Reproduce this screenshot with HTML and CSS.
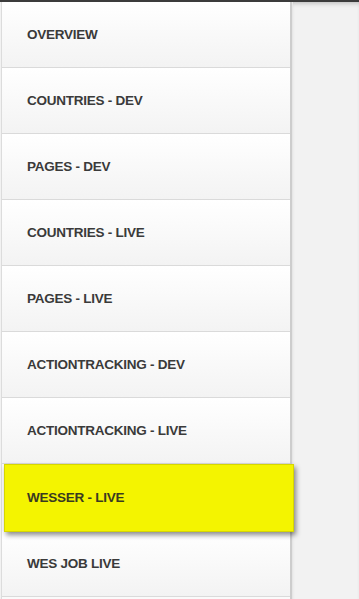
FILE: index.html
```html
<!DOCTYPE html>
<html lang="en">
<head>
    <meta charset="UTF-8">
    <meta name="viewport" content="width=device-width, initial-scale=1.0">
    <title>Reports</title>
    <link rel="stylesheet" href="styles.css">
</head>
<body>
    <div class="top-bar"></div>
    <div class="layout">
        <ul class="side-nav">
            <li class="nav-item">OVERVIEW</li>
            <li class="nav-item">COUNTRIES - DEV</li>
            <li class="nav-item">PAGES - DEV</li>
            <li class="nav-item">COUNTRIES - LIVE</li>
            <li class="nav-item">PAGES - LIVE</li>
            <li class="nav-item">ACTIONTRACKING - DEV</li>
            <li class="nav-item">ACTIONTRACKING - LIVE</li>
            <li class="nav-item active">WESSER - LIVE</li>
            <li class="nav-item">WES JOB LIVE</li>
        </ul>
        <div class="content"></div>
    </div>
</body>
</html>
```

FILE: styles.css
```css
body {
    margin: 0;
    font-family: "Liberation Sans", Arial, sans-serif;
    background: #f2f2f2;
    color: #3a3a3a;
    overflow: hidden;
}

.top-bar {
    height: 2px;
    background: #3c3c3c;
}

.layout {
    display: flex;
    height: 597px;
}

.side-nav {
    list-style: none;
    margin: 0 0 0 1px;
    padding: 0;
    width: 288px;
    border-left: 1px solid #dcdcdc;
    border-right: 2px solid #cdcdcd;
    background: #fafafa;
    flex-shrink: 0;
}

.nav-item {
    height: 65px;
    line-height: 65px;
    padding-left: 25px;
    border-bottom: 1px solid #dadada;
    background: linear-gradient(#ffffff, #f3f3f3);
    font-size: 13.5px;
    font-weight: bold;
    letter-spacing: -0.25px;
}

.nav-item.active {
    position: relative;
    z-index: 1;
    height: 66px;
    line-height: 66px;
    margin: 0 -4px -1px 2px;
    padding-left: 22px;
    background: #f4f400;
    border: 1px solid #d6d600;
    box-shadow: 2px 3px 5px rgba(0, 0, 0, 0.45);
    color: #3a3a20;
}

.content {
    flex: 1;
    border-left: 1px solid #e6e6e6;
    box-shadow: inset 0 4px 5px -3px rgba(0, 0, 0, 0.25);
}
```
